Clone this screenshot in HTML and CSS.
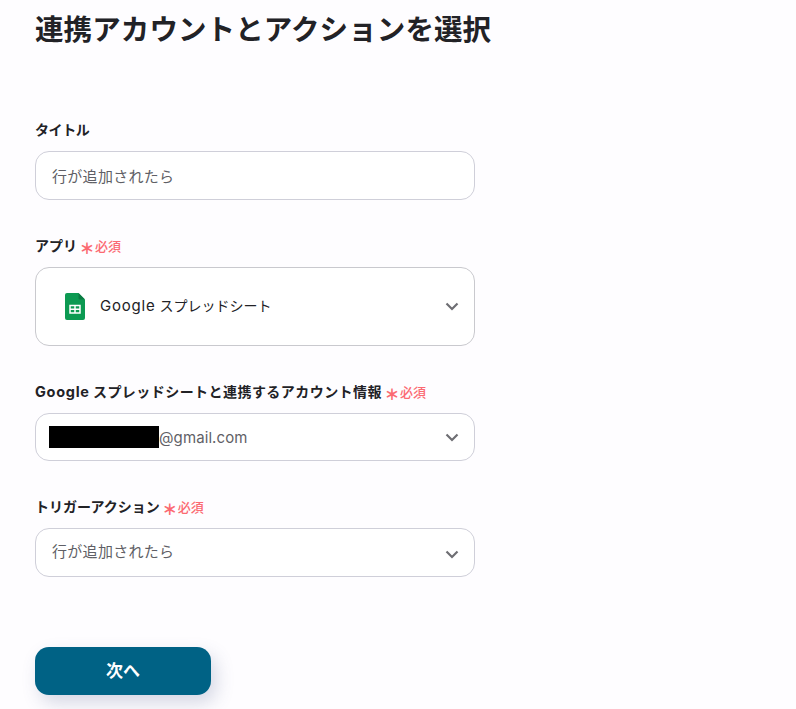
FILE: index.html
```html
<!DOCTYPE html>
<html lang="ja">
<head>
    <meta charset="UTF-8">
    <title>連携アカウントとアクションを選択</title>
    <link rel="stylesheet" href="styles.css">
</head>
<body>
    <div class="page">
        <h1>連携アカウントとアクションを選択</h1>

        <div class="form-group group-title">
            <div class="label label-tight">タイトル</div>
            <div class="field field-text">行が追加されたら</div>
        </div>

        <div class="form-group">
            <div class="label">アプリ<span class="required"><span class="star">＊</span>必須</span></div>
            <div class="field field-app">
                <svg class="sheets-icon" viewBox="0 0 20 27" xmlns="http://www.w3.org/2000/svg">
                    <path fill="#0c9a52" d="M2 0h11.500L20 6.500V25a2 2 0 0 1-2 2H2a2 2 0 0 1-2-2V2a2 2 0 0 1 2-2z"/>
                    <path fill="#0a7a42" d="M13.500 0L20 6.500h-5a1.500 1.500 0 0 1-1.500-1.500z"/>
                    <path fill="none" stroke="#fff" stroke-width="1.500" d="M5 12.500h10v7.500H5zM5 16.250h10M10 12.500v7.500"/>
                </svg>
                <span class="app-name"><span class="latin">Google</span> スプレッドシート</span>
                <svg class="chevron" viewBox="0 0 14 9" xmlns="http://www.w3.org/2000/svg"><path d="M1.500 1.500L7 7l5.500-5.500"/></svg>
            </div>
        </div>

        <div class="form-group">
            <div class="label"><span class="latin">Google</span>&nbsp;<span class="wide-kana">スプレッドシートと連携するアカウント情報</span><span class="required"><span class="star">＊</span>必須</span></div>
            <div class="field field-account">
                <span class="redacted"></span><span class="email">@gmail.com</span>
                <svg class="chevron" viewBox="0 0 14 9" xmlns="http://www.w3.org/2000/svg"><path d="M1.500 1.500L7 7l5.500-5.500"/></svg>
            </div>
        </div>

        <div class="form-group">
            <div class="label">トリガーアクション<span class="required"><span class="star">＊</span>必須</span></div>
            <div class="field field-text field-trigger">行が追加されたら
                <svg class="chevron" viewBox="0 0 14 9" xmlns="http://www.w3.org/2000/svg"><path d="M1.500 1.500L7 7l5.500-5.500"/></svg>
            </div>
        </div>

        <button class="next-button" type="button">次へ</button>
    </div>
</body>
</html>
```

FILE: styles.css
```css
* {
    box-sizing: border-box;
}

body {
    margin: 0;
    background-color: #fefdff;
    color: #222226;
    font-family: "Inter", "Noto Sans CJK JP", sans-serif;
    height: 709px;
    overflow: hidden;
}

.page {
    width: 440px;
    margin-left: 35px;
}

h1 {
    margin: 0;
    padding-top: 9px;
    font-size: 28.500px;
    line-height: 42px;
    font-weight: 700;
    letter-spacing: 0.1px;
    white-space: nowrap;
}

/* Label + field blocks */
.form-group {
    display: flex;
    flex-direction: column;
    margin-top: 34px;
}

.group-title {
    margin-top: 67px;
}

.label {
    display: flex;
    align-items: center;
    height: 22px;
    margin-bottom: 11px;
    font-size: 14px;
    font-weight: 700;
    white-space: nowrap;
}

.label-tight {
    letter-spacing: -0.4px;
}

.label .latin {
    font-size: 14.500px;
    letter-spacing: 0.7px;
}

.wide-kana {
    letter-spacing: 0.45px;
}

.required {
    display: flex;
    align-items: center;
    margin-left: 2px;
    color: #fb6a72;
    font-size: 13px;
    font-weight: 500;
}

.star {
    width: 16px;
    text-align: center;
    font-size: 15px;
    font-weight: 900;
    position: relative;
    top: 2px;
}

.field {
    display: flex;
    align-items: center;
    position: relative;
    background-color: #fff;
    border: 1px solid #cfcfd9;
    border-radius: 14px;
    font-size: 15px;
    letter-spacing: 0.3px;
}

.field-text {
    height: 49px;
    padding-left: 16px;
    padding-bottom: 1px;
    color: #5f5f66;
}

.field-trigger {
    padding-bottom: 5px;
}

.field-trigger .chevron {
    margin-top: -3px;
}

.field-app {
    height: 79px;
    padding-left: 29px;
    border-color: #c9c9ce;
    font-size: 14px;
    letter-spacing: 0;
}

.field-app .chevron {
    margin-top: -5px;
}

.field-account {
    height: 48px;
    padding-left: 13px;
    color: #5f5f66;
}

.sheets-icon {
    width: 20px;
    height: 27px;
    flex-shrink: 0;
}

.app-name {
    margin-left: 15px;
    padding-bottom: 3px;
}

.app-name .latin {
    font-size: 15px;
    letter-spacing: 0.8px;
}

.redacted {
    width: 110px;
    height: 22px;
    background-color: #000;
}

.email {
    letter-spacing: 0.1px;
}

.chevron {
    position: absolute;
    right: 15px;
    top: 50%;
    width: 14px;
    height: 9px;
    margin-top: -4px;
    fill: none;
    stroke: #6e6e73;
    stroke-width: 2.200;
}

.next-button {
    display: block;
    width: 176px;
    height: 48px;
    margin-top: 70px;
    padding-bottom: 4px;
    border: none;
    border-radius: 14px;
    background-color: #006285;
    color: #fff;
    font-family: inherit;
    font-size: 17px;
    font-weight: 700;
    box-shadow: 5px 8px 18px rgba(70, 80, 130, 0.22);
}
```
